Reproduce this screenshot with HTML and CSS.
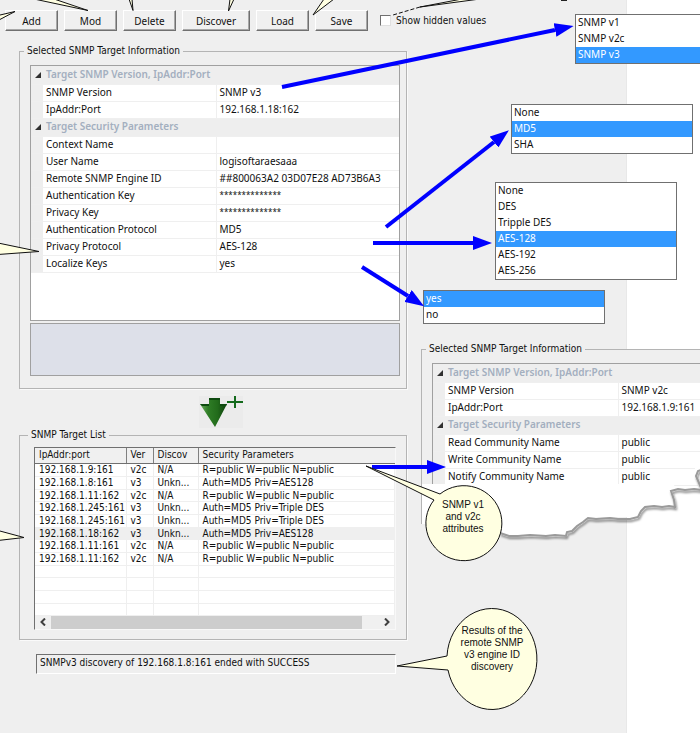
FILE: index.html
```html
<!DOCTYPE html>
<html lang="en">
<head>
    <meta charset="UTF-8">
    <meta name="viewport" content="width=device-width, initial-scale=1.0">
    <title>SNMP Targets</title>
    <link rel="stylesheet" href="styles.css">
</head>
<body>
    <div class="stage">
        <main class="dialog">
            <div class="toolbar">
                <button type="button" class="btn">Add</button>
                <button type="button" class="btn">Mod</button>
                <button type="button" class="btn">Delete</button>
                <button type="button" class="btn btn-wide">Discover</button>
                <button type="button" class="btn">Load</button>
                <button type="button" class="btn">Save</button>
                <label class="check"><input type="checkbox"> Show hidden values</label>
            </div>

            <fieldset class="group">
                <legend>Selected SNMP Target Information</legend>
                <div class="grid-box grid-box-full">
                    <table class="props">
                        <colgroup><col class="col-gutter"><col class="col-name"><col></colgroup>
                        <tr class="category"><th class="gutter"><i class="tri"></i></th><th colspan="2">Target SNMP Version, IpAddr:Port</th></tr>
                        <tr><td class="gutter"></td><td class="name">SNMP Version</td><td>SNMP v3</td></tr>
                        <tr><td class="gutter"></td><td class="name">IpAddr:Port</td><td>192.168.1.18:162</td></tr>
                        <tr class="category"><th class="gutter"><i class="tri"></i></th><th colspan="2">Target Security Parameters</th></tr>
                        <tr><td class="gutter"></td><td class="name">Context Name</td><td></td></tr>
                        <tr><td class="gutter"></td><td class="name">User Name</td><td>logisoftaraesaaa</td></tr>
                        <tr><td class="gutter"></td><td class="name">Remote SNMP Engine ID</td><td>##800063A2 03D07E28 AD73B6A3</td></tr>
                        <tr><td class="gutter"></td><td class="name">Authentication Key</td><td class="secret">**************</td></tr>
                        <tr><td class="gutter"></td><td class="name">Privacy Key</td><td class="secret">**************</td></tr>
                        <tr><td class="gutter"></td><td class="name">Authentication Protocol</td><td>MD5</td></tr>
                        <tr><td class="gutter"></td><td class="name">Privacy Protocol</td><td>AES-128</td></tr>
                        <tr><td class="gutter"></td><td class="name">Localize Keys</td><td>yes</td></tr>
                    </table>
                </div>
                <div class="description"></div>
            </fieldset>

            <button type="button" class="add-target" aria-label="Add to target list">
                <svg width="44" height="32" viewBox="0 0 44 32">
                    <defs>
                        <linearGradient id="green" x1="0" y1="0" x2="1" y2="0">
                            <stop offset="0" stop-color="#6fae5f"></stop>
                            <stop offset="0.3" stop-color="#2f7d26"></stop>
                            <stop offset="0.65" stop-color="#226b1b"></stop>
                            <stop offset="1" stop-color="#0d3f0c"></stop>
                        </linearGradient>
                    </defs>
                    <path d="M10 2h11v6h7L16 31 1 8h9z" fill="url(#green)"></path>
                    <path d="M10 2h11v2H10zM1 8h9v2H3zM21 8h7l-1 2h-6z" fill="#0e4a10"></path>
                    <path d="M28 6h16M36 0v12" stroke="#146a1c" stroke-width="2"></path>
                </svg>
            </button>

            <fieldset class="group group-list">
                <legend>SNMP Target List</legend>
                <div class="list-box">
                    <table class="targets">
                        <thead>
                            <tr><th class="col-ip">IpAddr:port</th><th class="col-ver">Ver</th><th class="col-disc">Discov</th><th>Security Parameters</th></tr>
                        </thead>
                        <tbody>
                            <tr><td>192.168.1.9:161</td><td>v2c</td><td>N/A</td><td>R=public W=public N=public</td></tr>
                            <tr><td>192.168.1.8:161</td><td>v3</td><td>Unkn...</td><td>Auth=MD5 Priv=AES128</td></tr>
                            <tr><td>192.168.1.11:162</td><td>v2c</td><td>N/A</td><td>R=public W=public N=public</td></tr>
                            <tr><td>192.168.1.245:161</td><td>v3</td><td>Unkn...</td><td>Auth=MD5 Priv=Triple DES</td></tr>
                            <tr><td>192.168.1.245:161</td><td>v3</td><td>Unkn...</td><td>Auth=MD5 Priv=Triple DES</td></tr>
                            <tr class="selected"><td>192.168.1.18:162</td><td>v3</td><td>Unkn...</td><td>Auth=MD5 Priv=AES128</td></tr>
                            <tr><td>192.168.1.11:161</td><td>v2c</td><td>N/A</td><td>R=public W=public N=public</td></tr>
                            <tr><td>192.168.1.11:162</td><td>v2c</td><td>N/A</td><td>R=public W=public N=public</td></tr>
                            <tr><td></td><td></td><td></td><td></td></tr>
                            <tr><td></td><td></td><td></td><td></td></tr>
                            <tr><td></td><td></td><td></td><td></td></tr>
                            <tr><td></td><td></td><td></td><td></td></tr>
                        </tbody>
                    </table>
                    <div class="scrollbar">
                        <button type="button" aria-label="Scroll left"><svg width="6" height="8" viewBox="0 0 6 8"><path d="M5 0.500 1.500 4 5 7.500"></path></svg></button>
                        <div class="thumb"></div>
                        <button type="button" aria-label="Scroll right"><svg width="6" height="8" viewBox="0 0 6 8"><path d="M1 0.500 4.500 4 1 7.500"></path></svg></button>
                    </div>
                </div>
            </fieldset>

            <div class="status">SNMPv3 discovery of 192.168.1.8:161 ended with SUCCESS</div>
        </main>

        <!-- SNMP v1 / v2c variant of the property grid -->
        <section class="variant">
            <fieldset class="group">
                <legend>Selected SNMP Target Information</legend>
                <div class="grid-box">
                    <table class="props">
                        <colgroup><col class="col-gutter"><col class="col-name"><col></colgroup>
                        <tr class="category"><th class="gutter"><i class="tri"></i></th><th colspan="2">Target SNMP Version, IpAddr:Port</th></tr>
                        <tr><td class="gutter"></td><td class="name">SNMP Version</td><td>SNMP v2c</td></tr>
                        <tr><td class="gutter"></td><td class="name">IpAddr:Port</td><td>192.168.1.9:161</td></tr>
                        <tr class="category"><th class="gutter"><i class="tri"></i></th><th colspan="2">Target Security Parameters</th></tr>
                        <tr><td class="gutter"></td><td class="name">Read Community Name</td><td>public</td></tr>
                        <tr><td class="gutter"></td><td class="name">Write Community Name</td><td>public</td></tr>
                        <tr><td class="gutter"></td><td class="name">Notify Community Name</td><td>public</td></tr>
                    </table>
                </div>
            </fieldset>
        </section>

        <select class="popup popup-version" size="3" aria-label="SNMP Version">
            <option>SNMP v1</option>
            <option>SNMP v2c</option>
            <option selected>SNMP v3</option>
        </select>
        <select class="popup popup-auth" size="3" aria-label="Authentication Protocol">
            <option>None</option>
            <option selected>MD5</option>
            <option>SHA</option>
        </select>
        <select class="popup popup-priv" size="6" aria-label="Privacy Protocol">
            <option>None</option>
            <option>DES</option>
            <option>Tripple DES</option>
            <option selected>AES-128</option>
            <option>AES-192</option>
            <option>AES-256</option>
        </select>
        <select class="popup popup-keys" size="2" aria-label="Localize Keys">
            <option selected>yes</option>
            <option>no</option>
        </select>

        <!-- Callout tails coming in from the top and left edges -->
        <svg class="notes notes-left" width="700" height="733" viewBox="0 0 700 733">
            <g class="callout">
                <path d="M-2 15.500 15 11.500-2 20.500"></path>
                <path d="M34-1 88 10.500 54-1"></path>
                <path d="M129-1 133 10.500 132-1"></path>
                <path d="M230-1 228.500 11 234-1"></path>
                <path d="M324-1 313 15 334-1"></path>
                <path d="M462-1 420 7 480-1"></path>
                <path d="M420 7 393 15" stroke-dasharray="4 2"></path>
                <path d="M-2 243 39 251.500-2 254.500"></path>
                <path d="M-2 530.500 24 537.500-2 540.500"></path>
            </g>
            <path d="M561 0h6" stroke="#222" stroke-width="2"></path>
        </svg>

        <svg class="notes notes-right" width="700" height="733" viewBox="0 0 700 733">
            <defs>
                <marker id="head" markerUnits="userSpaceOnUse" markerWidth="19" markerHeight="14" refX="0" refY="7" orient="auto">
                    <path d="M0 0 19 7 0 14z" fill="#0000ff"></path>
                </marker>
                <filter id="shade" x="-10%" y="-20%" width="120%" height="150%">
                    <feDropShadow dx="1" dy="2" stdDeviation="1" flood-color="#000" flood-opacity="0.500"></feDropShadow>
                </filter>
            </defs>

            <!-- Torn paper edge under the variant grid -->
            <path class="paper" d="M421 484H674L677 504 665 504 645 506 641 514 628 517 586 518 577 526 567 537 509 537 460 524H421z"></path>
            <path class="page" d="M702 464 696 466 694 471 699 487 702 488z"></path>
            <path class="tear" d="M500 533l9 3 9 0 12-1 16 1 9-1 11 1 1-4 5-1 5-5 6-4 5-4 8 1 14-1 8 1 12 0 8-2 3-6 4-4 9-1 8 1 7-1 6 1-1-7-3-9 7-2 7 1 9-1 8 1-6-14 2-5 6-2"></path>
            <path class="frame" d="M421.500 480V524"></path>

            <g class="arrows">
                <path d="M282 87 555 30"></path>
                <path d="M386 227 494 142"></path>
                <path d="M373 243H473"></path>
                <path d="M362 267 408 296"></path>
                <path d="M372 467H427"></path>
            </g>

            <g class="callout">
                <path d="M366 466 440 494A38 37.500 0 1 1 434 500z"></path>
                <path d="M397 666 447 656A45 50.500 0 1 1 448 670z"></path>
            </g>
        </svg>

        <p class="note note-attributes">SNMP v1<br>and v2c<br>attributes</p>
        <p class="note note-results">Results of the<br>remote SNMP<br>v3 engine ID<br>discovery</p>
    </div>
</body>
</html>
```
FILE: styles.css
```css
/* General */
* {
    box-sizing: border-box;
}

body {
    margin: 0;
    background: #ffffff;
    color: #101010;
    font-family: "DejaVu Sans Condensed", "DejaVu Sans", sans-serif;
    font-size: 10px;
}

button {
    font-family: inherit;
    font-size: inherit;
    color: inherit;
}

.stage {
    position: relative;
    overflow: hidden;
    min-height: 100vh;
}

.dialog {
    min-height: 100vh;
    margin-right: 73px;
    padding: 10px 219px 0 19px;
    background: #efefef;
    border-right: 1px solid #e8e8e8;
}

/* Toolbar */
.toolbar {
    display: flex;
    gap: 6px;
    margin: 0 -200px 13px -14px;
}

.btn {
    width: 53px;
    height: 21px;
    padding: 0;
    background: #f0f0f0;
    border: 1px solid;
    border-color: #ffffff #707070 #707070 #ffffff;
    box-shadow: inset -1px -1px #a8a8a8;
    font-family: "Noto Sans", sans-serif;
    line-height: 18px;
}

.btn-wide {
    width: 68px;
}

.check {
    display: flex;
    align-items: center;
    gap: 5px;
    margin-left: 6px;
}

.check input {
    appearance: none;
    width: 11px;
    height: 11px;
    margin: 0;
    background: #ffffff;
    border: 1px solid;
    border-color: #707070 #e0e0e0 #e0e0e0 #707070;
}

/* Group boxes */
.group {
    min-width: 0;
    margin: 0;
    padding: 7px 6px 12px 10px;
    border: 1px solid #b4b4b4;
    box-shadow: 1px 1px #fafafa;
}

.group legend {
    height: 14px;
    margin-left: -6px;
    padding: 0 3px;
    line-height: 14px;
}

.grid-box {
    background: #ffffff;
    border: 1px solid #a0a0a0;
}

.grid-box-full {
    height: 256px;
}

.description {
    height: 53px;
    margin-top: 2px;
    background: #dde0e9;
    border: 1px solid #a0a0a0;
}

/* Property grid */
.props {
    width: 100%;
    border-collapse: collapse;
    table-layout: fixed;
    font-family: "Noto Sans", sans-serif;
    line-height: 14px;
}

.props tr {
    height: 17px;
}

.props .category {
    height: 18px;
    background: #eeeeee;
    color: #a3afbf;
    text-align: left;
}

.props td,
.props th {
    padding: 0 0 2px 3px;
    border-bottom: 1px solid #efefef;
    white-space: nowrap;
}

.props th {
    font-weight: 600;
}

.props td.gutter,
.props th.gutter {
    padding: 0;
    background: #eeeeee;
}

.props .name {
    border-right: 1px solid #efefef;
}

.props .secret {
    font-size: 8px;
}

.col-gutter {
    width: 12px;
}

.col-name {
    width: 173px;
}

.tri {
    display: block;
    width: 0;
    margin-left: 4px;
    border-left: 6px solid transparent;
    border-bottom: 6px solid #303030;
}

/* Add button between the groups */
.add-target {
    display: block;
    width: 44px;
    height: 32px;
    margin: 7px auto 0 180px;
    padding: 0;
    background: #ebebeb;
    border: none;
}

.add-target svg {
    display: block;
}

/* Target list */
.group-list {
    padding: 5px 10px 9px 14px;
}

.list-box {
    background: #ffffff;
    border: 1px solid;
    border-color: #707070 #f8f8f8 #f8f8f8 #707070;
}

.targets {
    width: 100%;
    border-collapse: collapse;
    table-layout: fixed;
}

.targets th {
    height: 15px;
    padding: 0 0 0 4px;
    background: #f0f0f0;
    border-right: 1px solid #808080;
    border-bottom: 1px solid #707070;
    font-weight: normal;
    line-height: 12px;
    text-align: left;
}

.targets th:last-child {
    border-right: none;
}

.targets td {
    height: 13px;
    padding: 1px 0 0 4px;
    border-right: 1px solid #efefef;
    border-bottom: 1px solid #efefef;
    line-height: 10px;
    white-space: nowrap;
}

.targets tr:nth-child(3n) td {
    height: 12px;
}

.targets .selected {
    background: #efefef;
}

.targets .col-ip {
    width: 91px;
}

.targets .col-ver {
    width: 27px;
}

.targets .col-disc {
    width: 45px;
}

.scrollbar {
    display: flex;
    height: 13px;
    background: #f0f0f0;
}

.scrollbar button {
    width: 16px;
    padding: 0;
    background: none;
    border: none;
}

.scrollbar svg {
    display: block;
    margin: 0 auto;
    fill: none;
    stroke: #404040;
    stroke-width: 2;
}

.scrollbar .thumb {
    flex: 1;
    margin-right: 17px;
    background: #cdcdcd;
}

.status {
    height: 20px;
    margin: 14px 11px 0 17px;
    padding-left: 3px;
    border: 1px solid;
    border-color: #707070 #ffffff #ffffff #707070;
    line-height: 16px;
}

/* Variant panel laid over the dialog */
.variant {
    position: absolute;
    top: 342px;
    right: 0;
    width: 279px;
}

.variant .group {
    margin-right: -20px;
    padding-bottom: 0;
    padding-right: 0;
    border-bottom: none;
    background: #efefef;
    box-shadow: none;
}

.variant .grid-box {
    border-bottom: none;
}

/* Drop-down lists laid over the dialog */
.popup {
    position: absolute;
    width: 182px;
    padding: 0;
    background: #ffffff;
    border: 1px solid #707070;
    border-radius: 0;
    overflow: hidden;
    color: #101010;
    font-family: "Noto Sans", sans-serif;
    font-size: 10px;
    outline: none;
}

.popup option {
    height: 16px;
    min-height: 16px;
    padding: 0 2px;
    line-height: 16px;
}

.popup option:checked {
    background: #3399ff;
    color: #ffffff;
}

.popup-version {
    top: 14px;
    right: -57px;
}

.popup-auth {
    top: 104px;
    right: 7px;
}

.popup-priv {
    top: 182px;
    right: 23px;
}

.popup-keys {
    top: 290px;
    right: 95px;
}

/* Arrows and callouts */
.notes {
    position: absolute;
    top: 0;
    pointer-events: none;
}

.notes-left {
    left: 0;
}

.notes-right {
    right: 0;
}

.callout path {
    fill: #ffffe1;
    stroke: #101010;
}

.arrows path {
    fill: none;
    stroke: #0000ff;
    stroke-width: 4;
    stroke-linecap: butt;
    marker-end: url(#head);
}

.paper,
.page {
    fill: #ffffff;
}

.tear {
    fill: none;
    stroke: #9a9a9a;
    stroke-width: 2;
    filter: url(#shade);
}

.frame {
    stroke: #b4b4b4;
}

.note {
    position: absolute;
    width: 80px;
    margin: 0;
    font-family: "Liberation Sans", Arial, sans-serif;
    font-size: 10px;
    line-height: 12px;
    text-align: center;
}

.note-attributes {
    top: 499px;
    right: 197px;
}

.note-results {
    top: 625px;
    right: 168px;
}
```
